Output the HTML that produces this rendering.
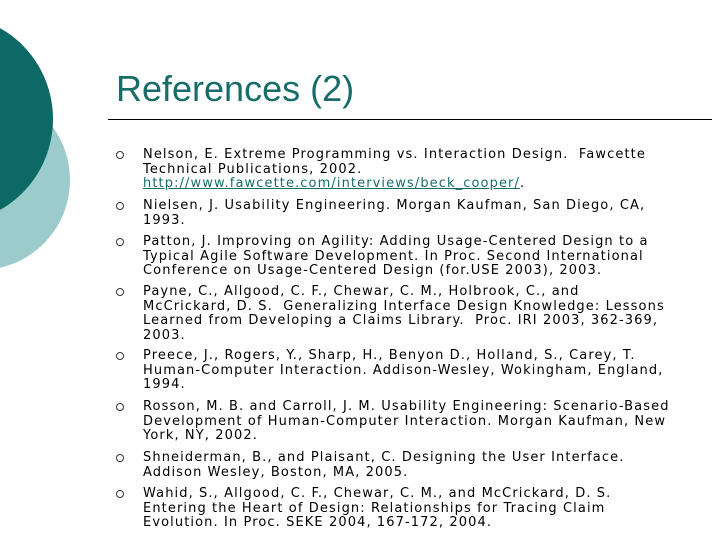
<!DOCTYPE html>
<html><head><style>
body{margin:0;width:720px;height:540px;background:#fff;position:relative;overflow:hidden;font-family:"DejaVu Sans","Liberation Sans",sans-serif;}
.c{position:absolute;border-radius:50%;}
h1{position:absolute;left:116px;top:68px;margin:0;font:36px "Liberation Sans",sans-serif;color:#176d68;font-weight:normal;}
.rule{position:absolute;left:108px;top:119px;width:604px;height:1px;background:#000;}
.it{position:absolute;left:143px;font-size:13px;letter-spacing:1.1px;line-height:14.5px;white-space:pre;color:#000;}
.b{position:absolute;left:116px;width:6px;height:6px;border:1px solid #333;border-radius:50%;}
a{color:#176d68;text-decoration:underline;}
</style></head><body>
<div class="c" style="left:-110px;top:90px;width:180px;height:180px;background:#9ccbcb"></div>
<div class="c" style="left:-153px;top:15px;width:206px;height:208px;background:#0d6965"></div>
<h1>References (2)</h1>
<div class="rule"></div>

<div class="b" style="top:151px"></div>
<div class="it" style="top:148px">Nelson, E. Extreme Programming vs. Interaction Design.  Fawcette
Technical Publications, 2002.
<a>http://www.fawcette.com/interviews/beck_cooper/</a>.</div>

<div class="b" style="top:202px"></div>
<div class="it" style="top:199px">Nielsen, J. Usability Engineering. Morgan Kaufman, San Diego, CA,
1993.</div>

<div class="b" style="top:238px"></div>
<div class="it" style="top:235px">Patton, J. Improving on Agility: Adding Usage-Centered Design to a
Typical Agile Software Development. In Proc. Second International
Conference on Usage-Centered Design (for.USE 2003), 2003.</div>

<div class="b" style="top:288px"></div>
<div class="it" style="top:285px">Payne, C., Allgood, C. F., Chewar, C. M., Holbrook, C., and
McCrickard, D. S.  Generalizing Interface Design Knowledge: Lessons
Learned from Developing a Claims Library.  Proc. IRI 2003, 362-369,
2003.</div>

<div class="b" style="top:352px"></div>
<div class="it" style="top:349px">Preece, J., Rogers, Y., Sharp, H., Benyon D., Holland, S., Carey, T.
Human-Computer Interaction. Addison-Wesley, Wokingham, England,
1994.</div>

<div class="b" style="top:403px"></div>
<div class="it" style="top:400px">Rosson, M. B. and Carroll, J. M. Usability Engineering: Scenario-Based
Development of Human-Computer Interaction. Morgan Kaufman, New
York, NY, 2002.</div>

<div class="b" style="top:454px"></div>
<div class="it" style="top:451px">Shneiderman, B., and Plaisant, C. Designing the User Interface.
Addison Wesley, Boston, MA, 2005.</div>

<div class="b" style="top:490px"></div>
<div class="it" style="top:487px">Wahid, S., Allgood, C. F., Chewar, C. M., and McCrickard, D. S.
Entering the Heart of Design: Relationships for Tracing Claim
Evolution. In Proc. SEKE 2004, 167-172, 2004.</div>
</body></html>
